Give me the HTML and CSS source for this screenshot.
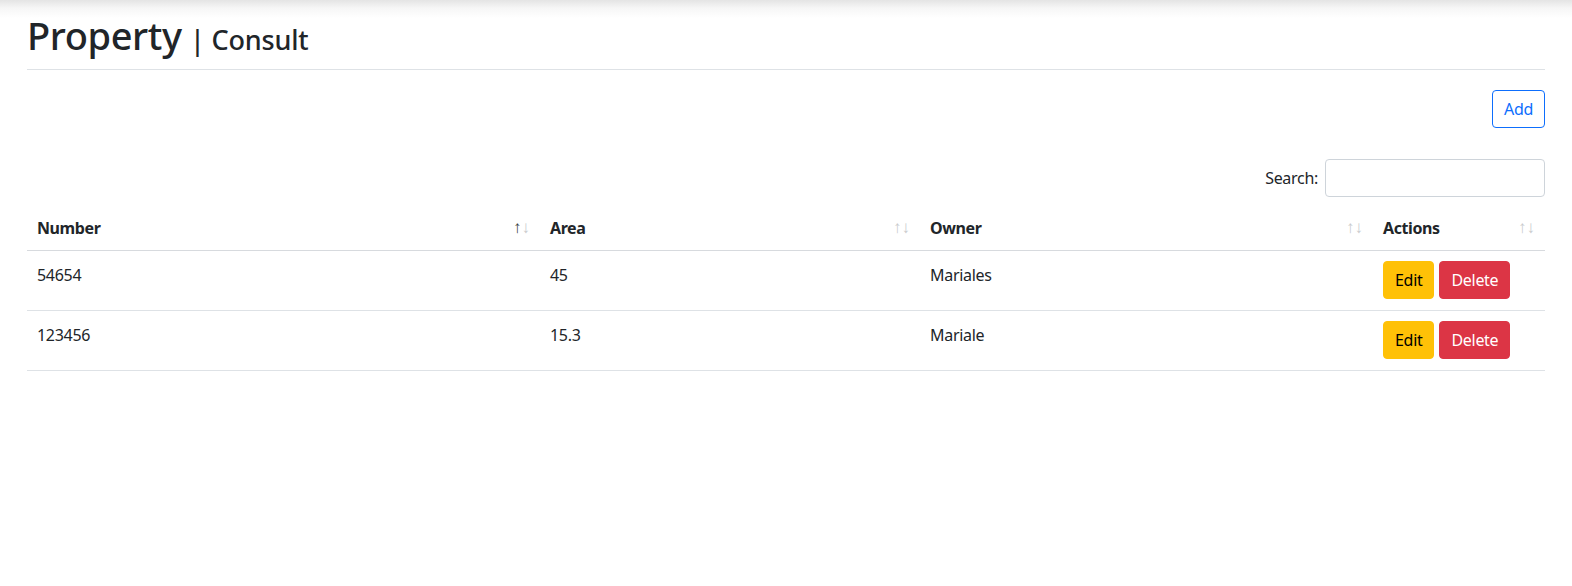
FILE: index.html
```html
<!DOCTYPE html>
<html lang="en">
<head>
<meta charset="utf-8">
<title>Property | Consult</title>
<link rel="stylesheet" href="styles.css">
</head>
<body>
<main class="page">
  <header class="title-bar">
    <h1 class="title">Property <span class="subtitle">| Consult</span></h1>
  </header>
  <div class="toolbar">
    <button class="btn btn-outline-primary" type="button">Add</button>
  </div>
  <div class="search-row">
    <label class="search-label">Search: <input class="search-input" type="search"></label>
  </div>
  <table class="data-table">
    <colgroup>
      <col class="col-number">
      <col class="col-area">
      <col class="col-owner">
      <col class="col-actions">
    </colgroup>
    <thead>
      <tr>
        <th><div class="th-inner"><span>Number</span><span class="sort"><span class="arrow active">↑</span><span class="arrow">↓</span></span></div></th>
        <th><div class="th-inner"><span>Area</span><span class="sort"><span class="arrow">↑</span><span class="arrow">↓</span></span></div></th>
        <th><div class="th-inner"><span>Owner</span><span class="sort"><span class="arrow">↑</span><span class="arrow">↓</span></span></div></th>
        <th><div class="th-inner"><span>Actions</span><span class="sort"><span class="arrow">↑</span><span class="arrow">↓</span></span></div></th>
      </tr>
    </thead>
    <tbody>
      <tr>
        <td>54654</td>
        <td>45</td>
        <td>Mariales</td>
        <td class="actions"><div class="btn-group"><button class="btn btn-warning" type="button">Edit</button><button class="btn btn-danger" type="button">Delete</button></div></td>
      </tr>
      <tr>
        <td>123456</td>
        <td>15.3</td>
        <td>Mariale</td>
        <td class="actions"><div class="btn-group"><button class="btn btn-warning" type="button">Edit</button><button class="btn btn-danger" type="button">Delete</button></div></td>
      </tr>
    </tbody>
  </table>
</main>
</body>
</html>
```

FILE: styles.css
```css
* { box-sizing: border-box; }

html, body {
  margin: 0;
  padding: 0;
  background: #fff;
}

body {
  font-family: "Noto Sans", "Open Sans", sans-serif;
  font-size: 16px;
  line-height: 1.5;
  color: #212529;
  background: linear-gradient(to bottom, #e4e4e4 0px, #f6f6f6 8px, #ffffff 18px) no-repeat;
  background-size: 100% 18px;
  min-height: 586px;
}

.page {
  padding: 0 27px;
}

.title-bar {
  padding-top: 11px;
  padding-bottom: 5px;
  border-bottom: 1px solid #dee2e6;
}

.title {
  margin: 0;
  font-size: 38px;
  font-weight: 500;
  line-height: 48px;
  letter-spacing: -0.4px;
  color: #212529;
}

.subtitle {
  font-size: 27px;
  letter-spacing: -0.2px;
  margin-left: -1px;
}

.toolbar {
  display: flex;
  justify-content: flex-end;
  margin-top: 20px;
}

.btn {
  font-family: inherit;
  font-size: 16px;
  line-height: 24px;
  padding: 6px 11px;
  border-radius: 4px;
  border: 1px solid transparent;
  cursor: pointer;
  letter-spacing: -0.3px;
}

.btn-outline-primary {
  color: #0d6efd;
  background: #fff;
  border-color: #0d6efd;
}

.btn-warning {
  background: #ffc107;
  border-color: #ffc107;
  color: #000;
}

.btn-danger {
  background: #dc3545;
  border-color: #dc3545;
  color: #fff;
}

.search-row {
  display: flex;
  justify-content: flex-end;
  margin-top: 31px;
}

.search-label {
  display: flex;
  align-items: center;
  gap: 7px;
  letter-spacing: -0.3px;
}

.search-input {
  width: 220px;
  height: 38px;
  border: 1px solid #ced4da;
  border-radius: 4px;
  padding: 6px 12px;
  font-family: inherit;
  font-size: 16px;
}

.data-table {
  width: 100%;
  border-collapse: collapse;
  margin-top: 10px;
  table-layout: fixed;
}

.col-number { width: 513px; }
.col-area { width: 380px; }
.col-owner { width: 453px; }
.col-actions { width: 172px; }

.data-table th {
  text-align: left;
  font-weight: 700;
  padding: 9px 10px 10px 10px;
  border-bottom: 1px solid #d7dade;
  letter-spacing: -0.4px;
}

.th-inner {
  display: flex;
  justify-content: space-between;
  align-items: center;
}

.sort {
  display: flex;
  gap: 0;
  font-family: "Liberation Sans", sans-serif;
  font-weight: 400;
  font-size: 17px;
  line-height: 24px;
  letter-spacing: 0;
}

.arrow {
  color: #c9cbcd;
}

.arrow.active {
  color: #3a3f44;
}

.data-table td {
  vertical-align: top;
  padding: 12px 10px 8px;
  border-bottom: 1px solid #dee2e6;
  height: 60px;
  letter-spacing: -0.3px;
}

.data-table td.actions {
  padding: 10px 10px 10px;
}

.btn-group {
  display: flex;
  gap: 5px;
}
```
